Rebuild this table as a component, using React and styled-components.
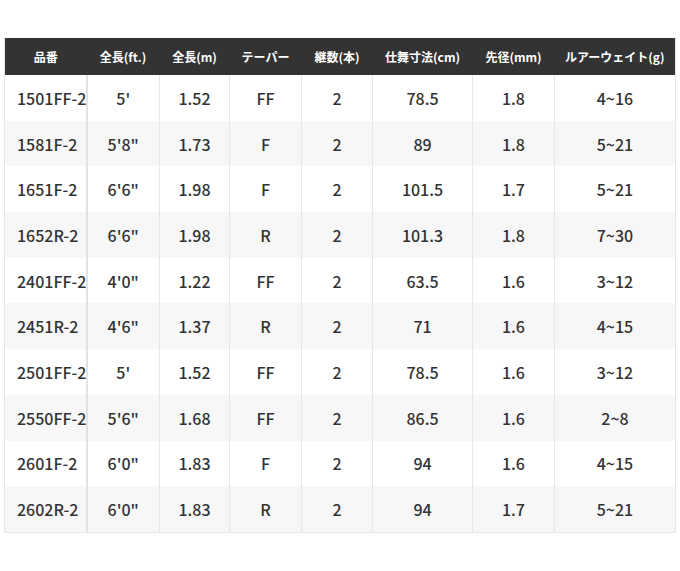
import React from "react";
import styled, { createGlobalStyle } from "styled-components";

const Global = createGlobalStyle`
  html, body { margin: 0; padding: 0; background: #fff; }
  body { font-family: "Noto Sans CJK JP", "Noto Sans", sans-serif; }
`;

const Wrap = styled.div`
  padding: 38px 5px 0 4px;
`;

const Table = styled.table`
  width: 671px;
  border-collapse: collapse;
  table-layout: fixed;
  border-left: 1px solid #e6e6e6;
  border-right: 1px solid #e6e6e6;
  border-bottom: 1px solid #e6e6e6;
`;

const Th = styled.th`
  background: #333333;
  color: #fff;
  font-size: 12px;
  font-weight: 700;
  height: 37px;
  padding: 0;
  text-align: center;
  white-space: nowrap;
`;

const Tr = styled.tr`
  background: ${(p) => (p.$alt ? "#f7f7f7" : "#ffffff")};
`;

const Td = styled.td`
  height: 45.7px;
  padding: 0;
  text-align: center;
  font-size: 16px;
  font-weight: 500;
  color: #333;
  white-space: nowrap;
  border-left: 1px solid #e6e6e6;
`;

const FirstTd = styled(Td)`
  text-align: left;
  padding-left: 12px;
  border-left: none;
  border-right: 2px solid #e2e2e2;
  overflow: visible;
`;

const widths = [82, 73, 70, 72, 71, 100, 82, 121];
const heads = ["品番", "全長(ft.)", "全長(m)", "テーパー", "継数(本)", "仕舞寸法(cm)", "先径(mm)", "ルアーウェイト(g)"];
const rows = [
  ["1501FF-2", "5'", "1.52", "FF", "2", "78.5", "1.8", "4~16"],
  ["1581F-2", "5'8\"", "1.73", "F", "2", "89", "1.8", "5~21"],
  ["1651F-2", "6'6\"", "1.98", "F", "2", "101.5", "1.7", "5~21"],
  ["1652R-2", "6'6\"", "1.98", "R", "2", "101.3", "1.8", "7~30"],
  ["2401FF-2", "4'0\"", "1.22", "FF", "2", "63.5", "1.6", "3~12"],
  ["2451R-2", "4'6\"", "1.37", "R", "2", "71", "1.6", "4~15"],
  ["2501FF-2", "5'", "1.52", "FF", "2", "78.5", "1.6", "3~12"],
  ["2550FF-2", "5'6\"", "1.68", "FF", "2", "86.5", "1.6", "2~8"],
  ["2601F-2", "6'0\"", "1.83", "F", "2", "94", "1.6", "4~15"],
  ["2602R-2", "6'0\"", "1.83", "R", "2", "94", "1.7", "5~21"],
];

export default function App() {
  return (
    <Wrap>
      <Global />
      <Table>
        <colgroup>
          {widths.map((w, i) => (
            <col key={i} style={{ width: w }} />
          ))}
        </colgroup>
        <thead>
          <tr>
            {heads.map((h) => (
              <Th key={h}>{h}</Th>
            ))}
          </tr>
        </thead>
        <tbody>
          {rows.map((r, i) => (
            <Tr key={r[0]} $alt={i % 2 === 1}>
              {r.map((c, j) =>
                j === 0 ? <FirstTd key={j}>{c}</FirstTd> : <Td key={j}>{c}</Td>
              )}
            </Tr>
          ))}
        </tbody>
      </Table>
    </Wrap>
  );
}
